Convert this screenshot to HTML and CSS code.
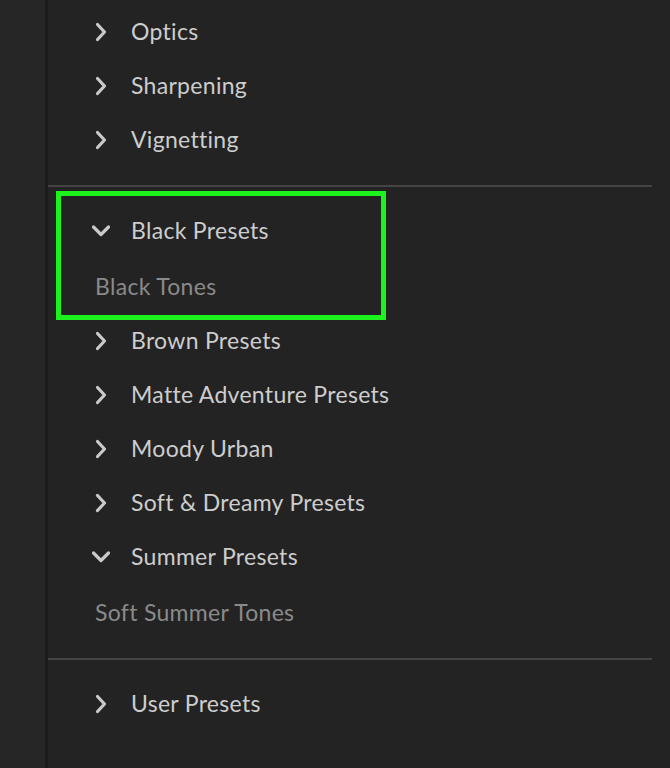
FILE: index.html
```html
<!DOCTYPE html>
<html>
<head>
<meta charset="utf-8">
<link rel="stylesheet" href="styles.css">
</head>
<body>
<div class="app">
  <div class="rail"></div>
  <div class="rail-edge"></div>
  <div class="panel">
    <div class="section first">
      <div class="row"><svg class="chev" viewBox="0 0 16 20"><polyline points="3.5,2.5 10.5,10 3.5,17.5"/></svg><span>Optics</span></div>
      <div class="row"><svg class="chev" viewBox="0 0 16 20"><polyline points="3.5,2.5 10.5,10 3.5,17.5"/></svg><span>Sharpening</span></div>
      <div class="row"><svg class="chev" viewBox="0 0 16 20"><polyline points="3.5,2.5 10.5,10 3.5,17.5"/></svg><span>Vignetting</span></div>
    </div>
    <div class="sep"></div>
    <div class="section second">
      <div class="row"><svg class="chev down" viewBox="0 0 20 14"><polyline points="2.5,3 10,10.5 17.5,3"/></svg><span>Black Presets</span></div>
      <div class="row sub"><span>Black Tones</span></div>
      <div class="row"><svg class="chev" viewBox="0 0 16 20"><polyline points="3.5,2.5 10.5,10 3.5,17.5"/></svg><span>Brown Presets</span></div>
      <div class="row"><svg class="chev" viewBox="0 0 16 20"><polyline points="3.5,2.5 10.5,10 3.5,17.5"/></svg><span>Matte Adventure Presets</span></div>
      <div class="row"><svg class="chev" viewBox="0 0 16 20"><polyline points="3.5,2.5 10.5,10 3.5,17.5"/></svg><span>Moody Urban</span></div>
      <div class="row"><svg class="chev" viewBox="0 0 16 20"><polyline points="3.5,2.5 10.5,10 3.5,17.5"/></svg><span>Soft &amp; Dreamy Presets</span></div>
      <div class="row"><svg class="chev down" viewBox="0 0 20 14"><polyline points="2.5,3 10,10.5 17.5,3"/></svg><span>Summer Presets</span></div>
      <div class="row sub"><span>Soft Summer Tones</span></div>
    </div>
    <div class="sep"></div>
    <div class="section third">
      <div class="row"><svg class="chev" viewBox="0 0 16 20"><polyline points="3.5,2.5 10.5,10 3.5,17.5"/></svg><span>User Presets</span></div>
    </div>
    <div class="highlight"></div>
  </div>
</div>
</body>
</html>
```
FILE: styles.css
```css
html, body {
  margin: 0;
  padding: 0;
  background: #232323;
}
.app {
  display: flex;
  height: 768px;
  font-family: "Lato", "Noto Sans", sans-serif;
}
.rail {
  width: 45px;
  background: #262626;
}
.rail-edge {
  width: 3px;
  background: #1b1b1b;
}
.panel {
  flex: 1;
  position: relative;
  background: #232323;
}
.section {
  display: flex;
  flex-direction: column;
}
.section.first { padding-top: 5px; }
.section.second { padding-top: 17px; }
.section.third { padding-top: 17px; }
.row {
  height: 54px;
  display: flex;
  align-items: center;
  padding-left: 46px;
  color: #cdcdcd;
  font-size: 23px;
  letter-spacing: 0.3px;
}
.row.sub {
  height: 56px;
  box-sizing: border-box;
  padding-top: 2px;
  padding-left: 47px;
  color: #8a8a8a;
}
.row span {
  position: relative;
  top: -1px;
}
.chev {
  width: 16px;
  height: 20px;
  margin-right: 21px;
  fill: none;
  stroke: #cacaca;
  stroke-width: 3.2;
  stroke-linecap: round;
  stroke-linejoin: round;
}
.chev.down {
  width: 20px;
  height: 14px;
  margin-left: -3px;
  margin-right: 20px;
}
.sep {
  height: 2px;
  background: #444444;
  margin: 18px 18px 0 0;
}
.highlight {
  position: absolute;
  left: 8px;
  top: 191px;
  width: 330px;
  height: 129px;
  box-sizing: border-box;
  border: 5px solid #1cf21c;
  pointer-events: none;
}
```
